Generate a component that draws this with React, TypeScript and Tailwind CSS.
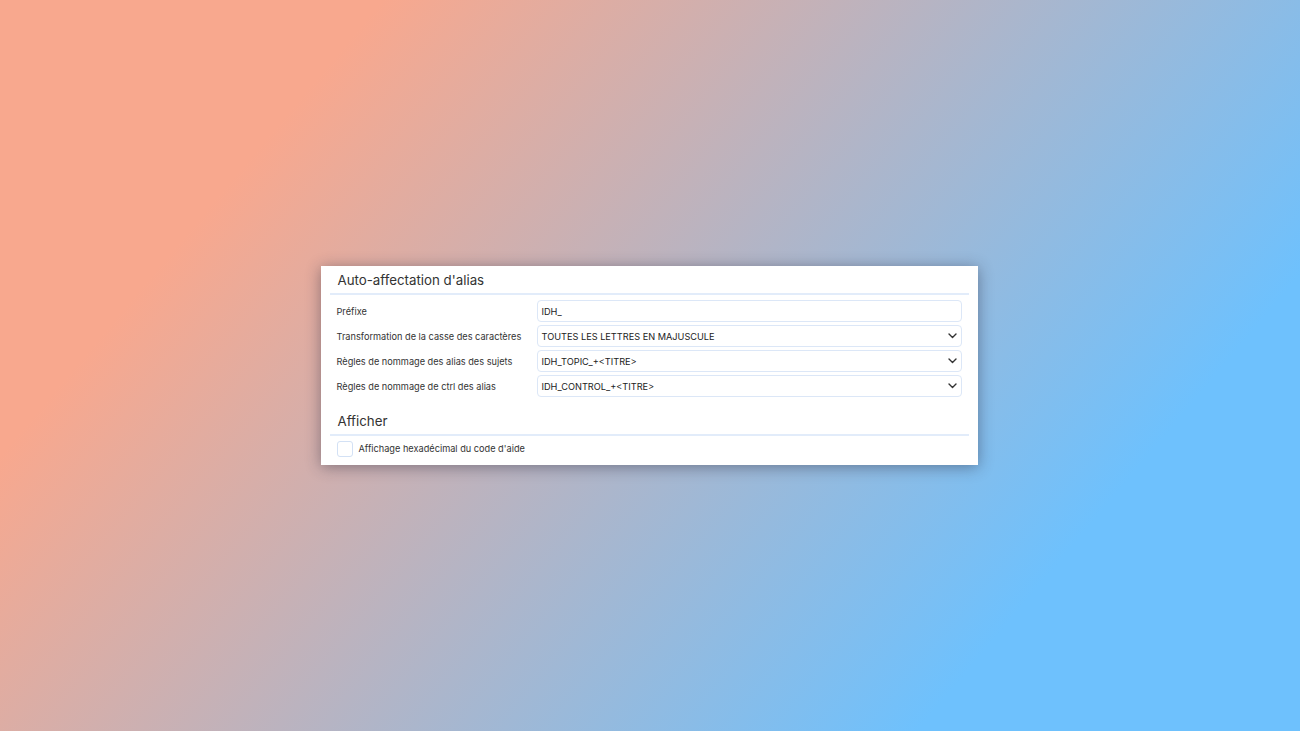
const font = { fontFamily: "Inter, 'Noto Sans', sans-serif" };

const Chevron = () => (
  <svg width="9" height="6" viewBox="0 0 9 6" fill="none" className="shrink-0">
    <path d="M1 1l3.5 3.5L8 1" stroke="#333" strokeWidth="1.4" strokeLinecap="round" strokeLinejoin="round" />
  </svg>
);

const Field = ({ label, value, select }: { label: string; value: string; select?: boolean }) => (
  <div className="flex items-center h-[22px]">
    <div className="w-[200px] shrink-0 pt-[2px] text-[9.2px] text-[#333]">{label}</div>
    <div className="flex-1 h-[22px] flex items-center justify-between border border-[#dce7f7] rounded-[4px] pl-[4px] pr-[4px] bg-white">
      <span className="pt-[2px] text-[9.2px] text-[#222]">{value}</span>
      {select && <Chevron />}
    </div>
  </div>
);

const SectionTitle = ({ children }: { children: string }) => (
  <div className="border-b-2 border-[#e2ecfa]">
    <h2 className="px-2 text-[13.3px] leading-[26px] text-[#333] font-normal">{children}</h2>
  </div>
);

export default function App() {
  return (
    <div
      className="w-full h-[731px] flex items-center justify-center bg-[linear-gradient(130deg,#f8a88e_20%,#6ec1fd_80%)]"
      style={font}
    >
      <div className="w-[657px] -translate-x-px bg-white px-[9px] pt-[1px] pb-[8px] shadow-[0_2px_14px_rgba(40,40,60,0.45)]">
        <SectionTitle>Auto-affectation d'alias</SectionTitle>
        <div className="flex flex-col gap-[3px] mt-[5px] pl-[7px] pr-[7px]">
          <Field label="Préfixe" value="IDH_" />
          <Field label="Transformation de la casse des caractères" value="TOUTES LES LETTRES EN MAJUSCULE" select />
          <Field label="Règles de nommage des alias des sujets" value="IDH_TOPIC_+<TITRE>" select />
          <Field label="Règles de nommage de ctrl des alias" value="IDH_CONTROL_+<TITRE>" select />
        </div>
        <div className="mt-[11px]">
          <SectionTitle>Afficher</SectionTitle>
        </div>
        <label className="flex items-center gap-[6px] mt-[5px] pl-[7px]">
          <span className="w-[16px] h-[16px] border border-[#d3e1f5] rounded-[3px] bg-white" />
          <span className="text-[9.2px] text-[#333]">Affichage hexadécimal du code d'aide</span>
        </label>
      </div>
    </div>
  );
}
